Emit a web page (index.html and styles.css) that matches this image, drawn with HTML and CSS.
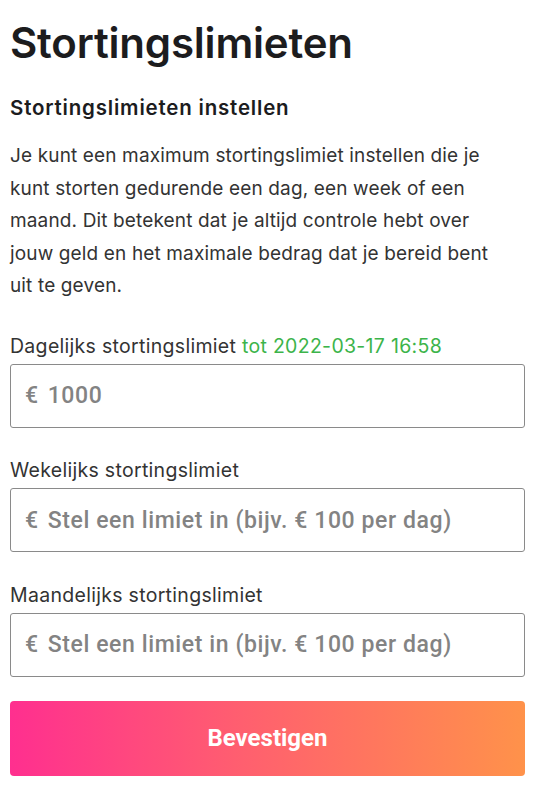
FILE: index.html
```html
<!DOCTYPE html>
<html lang="nl">
<head>
<meta charset="utf-8">
<title>Stortingslimieten</title>
<link rel="stylesheet" href="styles.css">
</head>
<body>
<main class="page">
  <h1 class="title">Stortingslimieten</h1>
  <h2 class="subtitle">Stortingslimieten instellen</h2>
  <p class="intro">Je kunt een maximum stortingslimiet instellen die je kunt storten gedurende een dag, een week of een maand. Dit betekent dat je altijd controle hebt over jouw geld en het maximale bedrag dat je bereid bent uit te geven.</p>
  <form class="form">
    <div class="field">
      <label class="label">Dagelijks stortingslimiet <span class="until">tot 2022-03-17 16:58</span></label>
      <div class="input"><span class="cur">€</span><span class="value">1000</span></div>
    </div>
    <div class="field">
      <label class="label">Wekelijks stortingslimiet</label>
      <div class="input"><span class="cur">€</span><span class="value">Stel een limiet in (bijv. € 100 per dag)</span></div>
    </div>
    <div class="field field-last">
      <label class="label">Maandelijks stortingslimiet</label>
      <div class="input"><span class="cur">€</span><span class="value">Stel een limiet in (bijv. € 100 per dag)</span></div>
    </div>
    <button class="submit" type="button">Bevestigen</button>
  </form>
</main>
</body>
</html>
```
FILE: styles.css
```css
* { box-sizing: border-box; }
html, body { margin: 0; padding: 0; background: #fff; }
body { font-family: Inter, "Noto Sans", sans-serif; color: #222; }
.page { padding: 18px 10px 0 10px; }
.title {
  margin: 0;
  font-size: 42px;
  font-weight: 600;
  line-height: 50px;
  color: #1c1c1e;
  letter-spacing: -0.2px;
}
.subtitle {
  margin: 27px 0 0 0;
  font-size: 20.5px;
  font-weight: 600;
  line-height: 26px;
  letter-spacing: 0.8px;
  color: #1c1c1e;
}
.intro {
  margin: 19px 0 0 0;
  max-width: 500px;
  font-size: 19px;
  line-height: 32.5px;
  letter-spacing: 0.14px;
  color: #333;
}
.form { margin-top: 31px; display: flex; flex-direction: column; }
.field { display: flex; flex-direction: column; gap: 6px; margin-bottom: 30.5px; }
.field-last { margin-bottom: 24px; }
.label { font-size: 19.5px; line-height: 24px; letter-spacing: 0.3px; color: #333; }
.until { color: #3cb44a; }
.input {
  height: 64px;
  border: 1px solid #8a8a8a;
  border-radius: 3px;
  display: flex;
  align-items: center;
  gap: 9px;
  padding-left: 14px;
  font-family: Roboto, sans-serif;
  font-weight: 500;
  font-size: 23px;
  letter-spacing: 0.6px;
  color: #838383;
}
.submit {
  height: 75px;
  border: 0;
  border-radius: 4px;
  background: linear-gradient(90deg, #ff2f8f 0%, #ff5f6f 45%, #ff924a 100%);
  color: #fff;
  font-family: Roboto, sans-serif;
  font-weight: 700;
  font-size: 24px;
  cursor: pointer;
}
```
